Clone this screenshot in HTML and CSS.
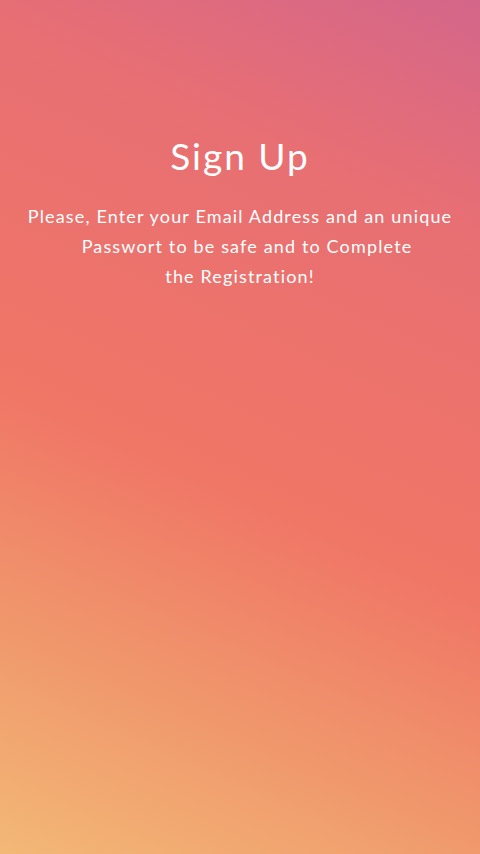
FILE: index.html
```html
<!DOCTYPE html>
<html lang="en">
<head>
<meta charset="utf-8">
<title>Sign Up</title>
<link rel="stylesheet" href="styles.css">
</head>
<body>
<main class="screen">
  <h1 class="title">Sign Up</h1>
  <p class="intro">
    <span class="line">Please, Enter your Email Address and an unique</span>
    <span class="line indent">Passwort to be safe and to Complete</span>
    <span class="line">the Registration!</span>
  </p>
</main>
</body>
</html>
```
FILE: styles.css
```css
html, body {
  margin: 0;
  padding: 0;
  height: 100%;
}
body {
  font-family: Lato, "Noto Sans", sans-serif;
  color: #ffffff;
  font-variant-ligatures: none;
}
.screen {
  min-height: 854px;
  box-sizing: border-box;
  padding-top: 132px;
  display: flex;
  flex-direction: column;
  align-items: center;
  background: linear-gradient(24deg, #f3b876 0%, #f0976c 22%, #f07666 44%, #e86f73 78%, #d4668a 100%);
}
.title {
  margin: 0;
  font-weight: 400;
  font-size: 37px;
  line-height: 48px;
  letter-spacing: 2px;
}
.intro {
  margin: 21px 0 0;
  font-size: 18px;
  line-height: 30px;
  letter-spacing: 1.15px;
  text-align: center;
  display: flex;
  flex-direction: column;
  align-items: center;
}
.line {
  display: block;
  white-space: nowrap;
}
.indent {
  padding-left: 14px;
}
```
